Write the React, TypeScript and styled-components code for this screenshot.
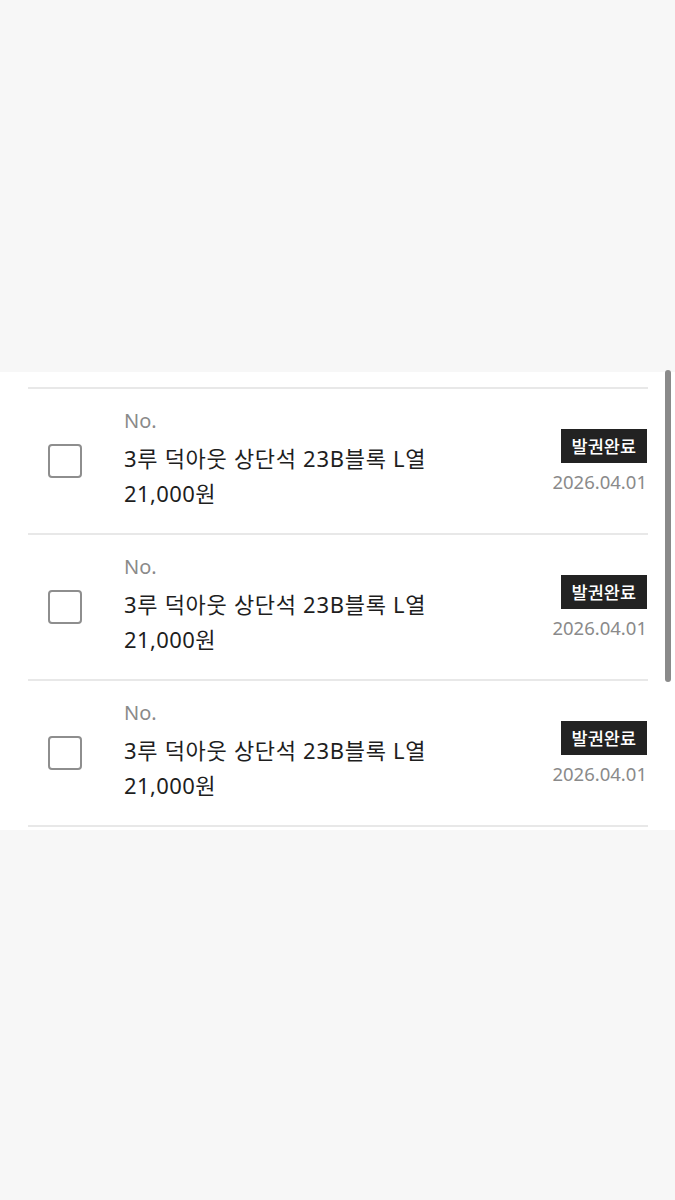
import styled, { createGlobalStyle } from 'styled-components'

const GlobalStyle = createGlobalStyle`
  html, body {
    margin: 0;
    padding: 0;
    background: #f7f7f7;
  }
  body {
    font-family: "Noto Sans", "Noto Sans CJK KR", sans-serif;
    -webkit-font-smoothing: antialiased;
  }
`

const Page = styled.div`
  height: 1200px;
  padding-top: 372px;
  box-sizing: border-box;
`

const Panel = styled.div`
  position: relative;
  background: #ffffff;
  padding: 15px 27px 3px 28px;
`

const List = styled.ul`
  list-style: none;
  margin: 0;
  padding: 0;
  border-top: 2px solid #e8e8e8;
`

const Row = styled.li`
  display: flex;
  align-items: center;
  height: 144px;
  padding: 0 1px 0 20px;
  border-bottom: 2px solid #e8e8e8;
`

const Checkbox = styled.span`
  flex: none;
  width: 34px;
  height: 34px;
  box-sizing: border-box;
  border: 2px solid #8e8e8e;
  border-radius: 4px;
  background: #fff;
`

const Info = styled.div`
  flex: 1;
  margin-left: 42px;
  padding-bottom: 5px;
  display: flex;
  flex-direction: column;
`

const OrderNo = styled.div`
  font-size: 20px;
  line-height: 26px;
  margin-bottom: 5px;
  color: #8a8a8a;
`

const Title = styled.div`
  font-size: 22px;
  line-height: 38px;
  color: #1e1e1e;
  letter-spacing: 0.7px;
`

const Price = styled.div`
  font-size: 22px;
  line-height: 32px;
  color: #1e1e1e;
  letter-spacing: 0.4px;
`

const Side = styled.div`
  display: flex;
  flex-direction: column;
  align-items: flex-end;
  gap: 7px;
`

const Badge = styled.span`
  display: inline-flex;
  align-items: center;
  height: 34px;
  padding: 0 11px;
  background: #222222;
  color: #ffffff;
  font-family: "Noto Sans CJK KR", sans-serif;
  font-size: 17.5px;
  font-weight: 500;
`

const DateText = styled.span`
  font-size: 18.5px;
  line-height: 24px;
  color: #8a8a8a;
`

const Scrollbar = styled.div`
  position: absolute;
  top: -2px;
  right: 4px;
  width: 6px;
  height: 312px;
  border-radius: 3px;
  background: #8a8a8a;
`

const tickets = [
  { no: 'No.', title: '3루 덕아웃 상단석 23B블록 L열', price: '21,000원', status: '발권완료', date: '2026.04.01' },
  { no: 'No.', title: '3루 덕아웃 상단석 23B블록 L열', price: '21,000원', status: '발권완료', date: '2026.04.01' },
  { no: 'No.', title: '3루 덕아웃 상단석 23B블록 L열', price: '21,000원', status: '발권완료', date: '2026.04.01' },
]

export default function App() {
  return (
    <>
      <GlobalStyle />
      <Page>
        <Panel>
          <List>
            {tickets.map((t, i) => (
              <Row key={i}>
                <Checkbox />
                <Info>
                  <OrderNo>{t.no}</OrderNo>
                  <Title>{t.title}</Title>
                  <Price>{t.price}</Price>
                </Info>
                <Side>
                  <Badge>{t.status}</Badge>
                  <DateText>{t.date}</DateText>
                </Side>
              </Row>
            ))}
          </List>
          <Scrollbar />
        </Panel>
      </Page>
    </>
  )
}
